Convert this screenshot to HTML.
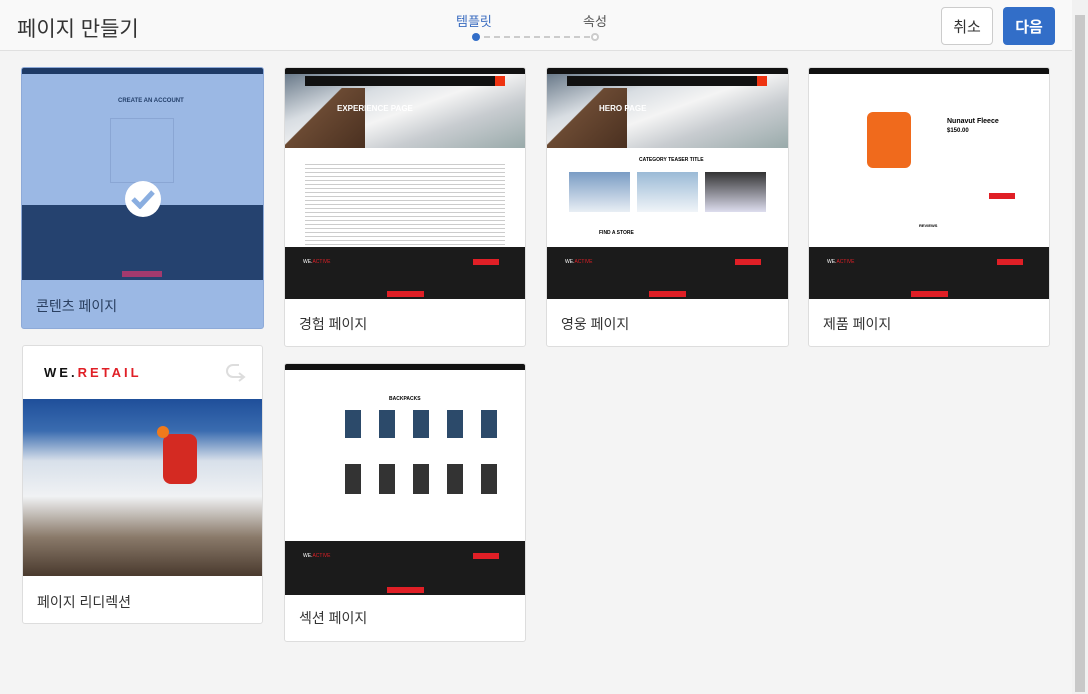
<!DOCTYPE html>
<html><head><meta charset="utf-8"><style>
*{box-sizing:border-box;margin:0;padding:0}
body{width:1088px;height:694px;background:#f4f4f4;font-family:"Liberation Sans","Noto Sans CJK KR",sans-serif;position:relative;overflow:hidden}
.hdr{position:absolute;left:0;top:0;width:1072px;height:51px;background:#f9f9f9;border-bottom:1px solid #e0e0e0}
.title{position:absolute;left:17px;top:13px;font-size:21px;color:#333}
.step{position:absolute;font-size:13px;color:#555;top:11px}
.btn{position:absolute;top:7px;height:38px;border-radius:4px;font-size:15px;display:flex;align-items:center;justify-content:center}
.sb{position:absolute;right:0;top:0;width:16px;height:694px;background:#f1f1f1}
.sb div{position:absolute;left:3px;top:15px;width:10px;height:677px;background:#c8c8c8}
.card{position:absolute;background:#fff;border:1px solid #ddd;border-radius:3px;overflow:hidden}
.lbl{position:absolute;left:14px;font-size:14px;color:#333}
.thumb{position:absolute;left:0;top:0;width:100%;background:#fff;overflow:hidden}
.topbar{height:6px;background:#111}
.hero{height:74px;background:linear-gradient(160deg,#6a7a8a 0%,#d8dde2 30%,#f4f4f4 50%,#c8ccd0 70%,#9aa 100%);position:relative}
.hero .rock{position:absolute;left:0;bottom:0;width:80px;height:60px;background:linear-gradient(135deg,transparent 40%,#6b4a33 41%,#4a3020 100%)}
.hero .t{position:absolute;left:52px;top:30px;color:#fff;font-size:8px;font-weight:bold}
.nav{position:absolute;left:20px;top:2px;width:200px;height:10px;background:#111}
.nav i{position:absolute;right:0;top:0;width:10px;height:10px;background:#e31}
.foot{position:absolute;left:0;width:100%;background:#1b1b1b}
.red{background:#e01f26}
.lines{position:absolute;left:20px;right:20px}
.lines div{height:1px;background:#ccc;margin-bottom:3px}
</style></head><body>
<div class="hdr">
<div class="title">페이지 만들기</div>
<div class="step" style="left:456px;color:#3a6cc0">템플릿</div>
<div class="step" style="left:583px">속성</div>
<div style="position:absolute;left:472px;top:33px;width:8px;height:8px;border-radius:50%;background:#326ec8"></div>
<div style="position:absolute;left:484px;top:36px;width:106px;border-top:2px dashed #ccc"></div>
<div style="position:absolute;left:591px;top:33px;width:8px;height:8px;border-radius:50%;border:2px solid #ccc;background:#fff"></div>
<div class="btn" style="left:941px;width:52px;border:1px solid #ccc;background:#fff;color:#333">취소</div>
<div class="btn" style="left:1003px;width:52px;background:#326ec8;color:#fff;font-weight:bold">다음</div>
</div>
<div class="sb"><div></div></div>

<div class="card" style="left:21px;top:67px;width:243px;height:262px;background:#9bb8e4;border-color:#8eaad8">
 <div class="thumb" style="height:212px;background:#9bb8e4">
  <div style="height:6px;background:#1e3a66"></div>
  <div style="position:absolute;left:96px;top:30px;font-size:6px;color:#24406b;font-weight:bold">CREATE AN ACCOUNT</div>
  <div style="position:absolute;left:88px;top:50px;width:64px;height:65px;border:1px solid #8aa6d4"></div>
  <div style="position:absolute;left:0;top:137px;width:100%;height:75px;background:#25426f"></div>
  <div style="position:absolute;left:100px;top:203px;width:40px;height:6px;background:#a33a6e"></div>
  <div style="position:absolute;left:103px;top:113px;width:36px;height:36px;border-radius:50%;background:#fff;display:flex;align-items:center;justify-content:center">
   <svg width="24" height="20" viewBox="0 0 24 20"><path d="M2 10l7 7L22 3" stroke="#8aaee0" stroke-width="5" fill="none"/></svg></div>
 </div>
 <div class="lbl" style="top:228px;color:#2a3f60">콘텐츠 페이지</div>
</div>

<div class="card" style="left:284px;top:67px;width:242px;height:280px">
 <div class="thumb" style="height:231px">
  <div class="topbar"></div>
  <div class="hero"><div class="rock"></div><div class="nav"><i></i></div><div class="t">EXPERIENCE PAGE</div></div>
  <div class="lines" style="top:96px"><div></div><div></div><div></div><div></div><div></div><div></div><div></div><div></div><div></div><div></div><div></div><div></div><div></div><div></div><div></div><div></div><div></div><div></div><div></div><div></div><div></div></div>
  <div class="foot" style="top:179px;height:52px"><div style="position:absolute;left:18px;top:12px;color:#fff;font-size:5px">WE.<span style="color:#e01f26">ACTIVE</span></div><div class="red" style="position:absolute;left:102px;top:44px;width:37px;height:6px"></div><div class="red" style="position:absolute;left:188px;top:12px;width:26px;height:6px"></div></div>
 </div>
 <div class="lbl" style="top:246px">경험 페이지</div>
</div>

<div class="card" style="left:546px;top:67px;width:243px;height:280px">
 <div class="thumb" style="height:231px">
  <div class="topbar"></div>
  <div class="hero"><div class="rock"></div><div class="nav"><i></i></div><div class="t" style="left:52px">HERO PAGE</div></div>
  <div style="position:absolute;left:92px;top:89px;font-size:5px;font-weight:bold">CATEGORY TEASER TITLE</div>
  <div style="position:absolute;left:22px;top:104px;width:61px;height:40px;background:linear-gradient(#7a9cc4,#e8eef4)"></div>
  <div style="position:absolute;left:90px;top:104px;width:61px;height:40px;background:linear-gradient(#9bbad6,#f0f4f8)"></div>
  <div style="position:absolute;left:158px;top:104px;width:61px;height:40px;background:linear-gradient(#333,#dde)"></div>
  <div style="position:absolute;left:52px;top:162px;font-size:5px;font-weight:bold">FIND A STORE</div>
  <div class="foot" style="top:179px;height:52px"><div style="position:absolute;left:18px;top:12px;color:#fff;font-size:5px">WE.<span style="color:#e01f26">ACTIVE</span></div><div class="red" style="position:absolute;left:102px;top:44px;width:37px;height:6px"></div><div class="red" style="position:absolute;left:188px;top:12px;width:26px;height:6px"></div></div>
 </div>
 <div class="lbl" style="top:246px">영웅 페이지</div>
</div>

<div class="card" style="left:808px;top:67px;width:242px;height:280px">
 <div class="thumb" style="height:231px">
  <div class="topbar"></div>
  <div style="position:absolute;left:58px;top:44px;width:44px;height:56px;background:#f06a1c;border-radius:6px"></div>
  <div style="position:absolute;left:138px;top:50px;font-size:7px;font-weight:bold">Nunavut Fleece</div>
  <div style="position:absolute;left:138px;top:60px;font-size:6px;font-weight:bold">$150.00</div>
  <div class="red" style="position:absolute;left:180px;top:125px;width:26px;height:6px"></div>
  <div style="position:absolute;left:110px;top:155px;font-size:4px;font-weight:bold">REVIEWS</div>
  <div class="foot" style="top:179px;height:52px"><div style="position:absolute;left:18px;top:12px;color:#fff;font-size:5px">WE.<span style="color:#e01f26">ACTIVE</span></div><div class="red" style="position:absolute;left:102px;top:44px;width:37px;height:6px"></div><div class="red" style="position:absolute;left:188px;top:12px;width:26px;height:6px"></div></div>
 </div>
 <div class="lbl" style="top:246px">제품 페이지</div>
</div>

<div class="card" style="left:22px;top:345px;width:241px;height:279px">
 <div style="position:absolute;left:21px;top:19px;font-size:13px;font-weight:bold;letter-spacing:3px;color:#111">WE.<span style="color:#e01f26">RETAIL</span></div>
 <svg style="position:absolute;left:202px;top:16px" width="24" height="24" viewBox="0 0 24 24"><path d="M14 3H8a6 6 0 0 0 0 12h10M14 11l5 4-5 4" stroke="#ddd" stroke-width="2" fill="none"/></svg>
 <div style="position:absolute;left:0;top:53px;width:100%;height:177px;background:linear-gradient(180deg,#1f4f9a 0%,#3a6cb0 18%,#d8e0ea 35%,#f0f2f4 55%,#8a7a6a 78%,#4a3a2e 100%)"></div>
 <div style="position:absolute;left:140px;top:88px;width:34px;height:50px;background:#d42a22;border-radius:8px"></div>
 <div style="position:absolute;left:134px;top:80px;width:12px;height:12px;background:#f07a1c;border-radius:50%"></div>
 <div class="lbl" style="top:246px">페이지 리디렉션</div>
</div>

<div class="card" style="left:284px;top:363px;width:242px;height:279px">
 <div class="thumb" style="height:231px">
  <div class="topbar"></div>
  <div style="position:absolute;left:104px;top:32px;font-size:5px;font-weight:bold">BACKPACKS</div>
  <div style="position:absolute;left:60px;top:46px;width:160px;height:28px;background:repeating-linear-gradient(90deg,#2c4a6a 0 16px,transparent 16px 34px)"></div>
  <div style="position:absolute;left:60px;top:100px;width:160px;height:30px;background:repeating-linear-gradient(90deg,#333 0 16px,transparent 16px 34px)"></div>
  <div class="foot" style="top:177px;height:54px"><div style="position:absolute;left:18px;top:12px;color:#fff;font-size:5px">WE.<span style="color:#e01f26">ACTIVE</span></div><div class="red" style="position:absolute;left:102px;top:46px;width:37px;height:6px"></div><div class="red" style="position:absolute;left:188px;top:12px;width:26px;height:6px"></div></div>
 </div>
 <div class="lbl" style="top:244px">섹션 페이지</div>
</div>
</body></html>
